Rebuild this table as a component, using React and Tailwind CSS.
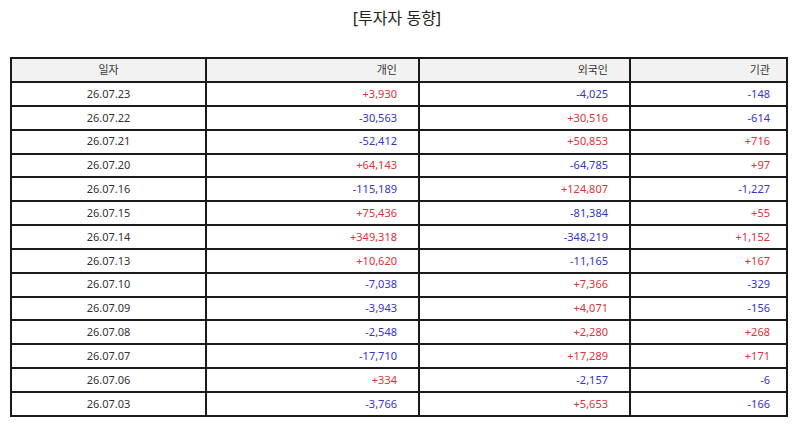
import React from "react";

const rows = [
  ["26.07.23", "+3,930", "-4,025", "-148"],
  ["26.07.22", "-30,563", "+30,516", "-614"],
  ["26.07.21", "-52,412", "+50,853", "+716"],
  ["26.07.20", "+64,143", "-64,785", "+97"],
  ["26.07.16", "-115,189", "+124,807", "-1,227"],
  ["26.07.15", "+75,436", "-81,384", "+55"],
  ["26.07.14", "+349,318", "-348,219", "+1,152"],
  ["26.07.13", "+10,620", "-11,165", "+167"],
  ["26.07.10", "-7,038", "+7,366", "-329"],
  ["26.07.09", "-3,943", "+4,071", "-156"],
  ["26.07.08", "-2,548", "+2,280", "+268"],
  ["26.07.07", "-17,710", "+17,289", "+171"],
  ["26.07.06", "+334", "-2,157", "-6"],
  ["26.07.03", "-3,766", "+5,653", "-166"],
];

const color = (v) => (v.startsWith("+") ? "text-[#e0303a]" : "text-[#3535c8]");

export default function App() {
  return (
    <div
      className="w-[794px] h-[425px] bg-white"
      style={{ fontFamily: '"Noto Sans", "Noto Sans CJK KR", sans-serif' }}
    >
      <div className="h-[37px] pt-[5px] text-center text-[16px] leading-[26px] text-[#222]">
        [투자자 동향]
      </div>
      <div className="pt-[20px] pl-[10px]">
        <table className="border-collapse text-[11px] text-[#333] w-[776px] table-fixed">
          <colgroup>
            <col className="w-[195px]" />
            <col className="w-[213px]" />
            <col className="w-[211px]" />
            <col className="w-[157px]" />
          </colgroup>
          <thead>
            <tr className="h-[24px] bg-[#f2f2f2]">
              <th className="border-2 border-[#1a1a1a] font-normal text-center p-0">일자</th>
              <th className="border-2 border-[#1a1a1a] font-normal text-right pr-[21px] p-0">개인</th>
              <th className="border-2 border-[#1a1a1a] font-normal text-right pr-[21px] p-0">외국인</th>
              <th className="border-2 border-[#1a1a1a] font-normal text-right pr-[16px] p-0">기관</th>
            </tr>
          </thead>
          <tbody>
            {rows.map((r) => (
              <tr key={r[0]} className="h-[23.85px]">
                <td className="border-2 border-[#1a1a1a] text-center p-0">{r[0]}</td>
                <td className={`border-2 border-[#1a1a1a] text-right pr-[21px] p-0 ${color(r[1])}`}>{r[1]}</td>
                <td className={`border-2 border-[#1a1a1a] text-right pr-[21px] p-0 ${color(r[2])}`}>{r[2]}</td>
                <td className={`border-2 border-[#1a1a1a] text-right pr-[16px] p-0 ${color(r[3])}`}>{r[3]}</td>
              </tr>
            ))}
          </tbody>
        </table>
      </div>
    </div>
  );
}
